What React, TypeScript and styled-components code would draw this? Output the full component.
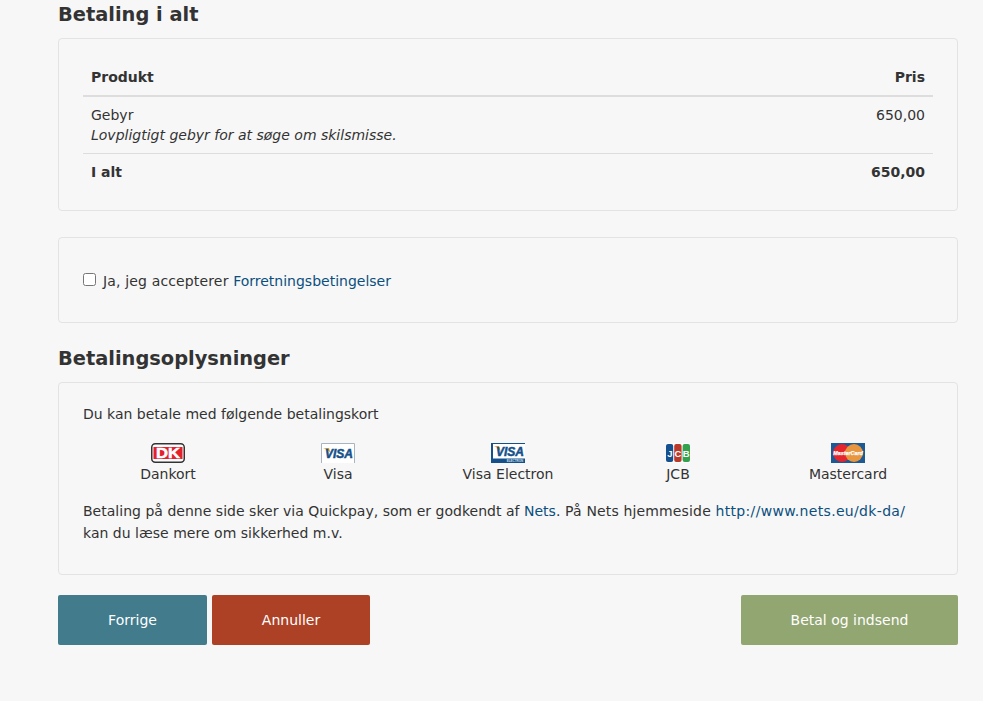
import styled, { createGlobalStyle } from "styled-components";

const GlobalStyle = createGlobalStyle`
  html, body {
    margin: 0;
    padding: 0;
    background: #f7f7f7;
    color: #333;
    font-family: "DejaVu Sans", Verdana, sans-serif;
    font-size: 14px;
    line-height: 20px;
  }
`;

const Page = styled.div`
  width: 900px;
  height: 701px;
  margin-left: 58px;
  overflow: hidden;
`;
const Heading = styled.h2<{ $mt: number }>`
  margin: ${(props) => props.$mt}px 0 0;
  font-size: 19.4px;
  line-height: 28px;
  font-weight: 700;
  color: #333;
`;
const Panel = styled.section<{ $height: number; $mt: number; $pt: number }>`
  box-sizing: border-box;
  height: ${(props) => props.$height}px;
  margin-top: ${(props) => props.$mt}px;
  padding: ${(props) => props.$pt}px 24px 0;
  border: 1px solid #e3e3e3;
  border-radius: 4px;
`;
const TotalTable = styled.table`
  width: 100%;
  border-collapse: collapse;
  th, td {
    padding: 8px;
    text-align: left;
    vertical-align: top;
  }
  th:last-child, td:last-child {
    text-align: right;
  }
  thead th {
    border-bottom: 2px solid #ddd;
  }
  tfoot td {
    border-top: 1px solid #ddd;
    font-weight: 700;
  }
`;
const Note = styled.em`
  display: block;
`;
const TermsRow = styled.label`
  display: flex;
  align-items: flex-start;
`;
const CheckBox = styled.input`
  width: 13px;
  height: 13px;
  margin: 2px 7px 0 0;
`;
const Tracked = styled.span`
  letter-spacing: 0.15px;
`;
const Link = styled.a`
  color: #0b4f7d;
  text-decoration: none;
  letter-spacing: 0;
`;
const UrlLink = styled(Link)`
  letter-spacing: 0.33px;
`;
const Intro = styled.p`
  margin: 0;
`;
const Paragraph = styled.p`
  margin: 0;
  line-height: 22px;
  letter-spacing: 0.02px;
`;
const CardList = styled.div`
  display: grid;
  grid-template-columns: repeat(5, 1fr);
  margin: 19px 0 16px;
  text-align: center;
`;
const Card = styled.div`
  display: flex;
  flex-direction: column;
  align-items: center;
`;
const CardLogo = styled.svg`
  display: block;
  width: 34px;
  height: 20px;
  margin-bottom: 1px;
`;
const LogoText = styled.text`
  font-family: "Liberation Sans", Arial, sans-serif;
  font-weight: 700;
`;
const Actions = styled.div`
  display: flex;
  gap: 5px;
  margin-top: 20px;
`;
const Button = styled.button<{ $color: string; $width: number }>`
  width: ${(props) => props.$width}px;
  height: 50px;
  padding: 0;
  border: 0;
  border-radius: 2px;
  background: ${(props) => props.$color};
  color: #fff;
  font-family: inherit;
  font-size: 14px;
`;
const Spacer = styled.div`
  flex: 1;
`;

function DankortLogo() {
  return (
    <CardLogo viewBox="0 0 34 20">
      <rect x="0.75" y="0.75" width="32.5" height="18.5" rx="3.5" fill="#fff" stroke="#333" strokeWidth="1.5" />
      <rect x="2.5" y="4" width="29" height="12" fill="#e3202b" />
      <LogoText x="17" y="15" textAnchor="middle" fontSize="14" textLength="24" lengthAdjust="spacingAndGlyphs" fill="#fff" stroke="#fff" strokeWidth="0.5">
        DK
      </LogoText>
    </CardLogo>
  );
}

function VisaLogo() {
  return (
    <CardLogo viewBox="0 0 34 20">
      <rect width="34" height="20" fill="#fff" />
      <path d="M0.5 20V0.5H33.5V20" fill="none" stroke="#a9b4c0" />
      <path d="M2 5H8L10 11C8.5 8 6 6 2 5Z" fill="#e8a33c" />
      <LogoText x="18" y="15" textAnchor="middle" fontSize="12" fontStyle="italic" fill="#15508a" stroke="#15508a" strokeWidth="0.5">
        VISA
      </LogoText>
    </CardLogo>
  );
}

function VisaElectronLogo() {
  return (
    <CardLogo viewBox="0 0 34 20">
      <rect width="34" height="20" fill="#15508a" />
      <rect x="2" y="1" width="32" height="14.5" fill="#fff" />
      <path d="M3 3H8L10 9C8.5 6 6 4 3 3Z" fill="#e8a33c" />
      <LogoText x="19" y="12.8" textAnchor="middle" fontSize="12" fontStyle="italic" fill="#15508a" stroke="#15508a" strokeWidth="0.5">
        VISA
      </LogoText>
      <LogoText x="24" y="19.2" textAnchor="middle" fontSize="3" fill="#cfe0ee">
        ELECTRON
      </LogoText>
    </CardLogo>
  );
}

function JcbLogo() {
  return (
    <CardLogo viewBox="0 0 34 20">
      <rect x="5" y="0" width="24" height="20" fill="#fff" />
      <rect x="5" y="1" width="7.2" height="18" rx="2" fill="#15508f" />
      <rect x="13.2" y="1" width="7.4" height="18" rx="2" fill="#b93a2b" />
      <rect x="21.6" y="1" width="7.4" height="18" rx="2" fill="#34a14f" />
      <LogoText x="8.8" y="14" textAnchor="middle" fontSize="9.5" fill="#fff">J</LogoText>
      <LogoText x="17" y="14" textAnchor="middle" fontSize="9.5" fill="#fff">C</LogoText>
      <LogoText x="25.3" y="14" textAnchor="middle" fontSize="9.5" fill="#fff">B</LogoText>
    </CardLogo>
  );
}

function MastercardLogo() {
  return (
    <CardLogo viewBox="0 0 34 20">
      <rect width="34" height="20" fill="#1c5a96" />
      <circle cx="11" cy="10" r="9" fill="#e5262c" />
      <circle cx="23" cy="10" r="9" fill="#e8973f" />
      <LogoText x="17" y="12" textAnchor="middle" fontSize="5.4" fontStyle="italic" fill="#fff" stroke="#fff" strokeWidth="0.25">
        MasterCard
      </LogoText>
    </CardLogo>
  );
}

const cards = [
  { name: "Dankort", logo: <DankortLogo /> },
  { name: "Visa", logo: <VisaLogo /> },
  { name: "Visa Electron", logo: <VisaElectronLogo /> },
  { name: "JCB", logo: <JcbLogo /> },
  { name: "Mastercard", logo: <MastercardLogo /> },
];

function App() {
  return (
    <Page>
      <GlobalStyle />
      <Heading $mt={1}>Betaling i alt</Heading>
      <Panel $height={173} $mt={9} $pt={20}>
        <TotalTable>
          <thead>
            <tr>
              <th>Produkt</th>
              <th>Pris</th>
            </tr>
          </thead>
          <tbody>
            <tr>
              <td>
                Gebyr
                <Note>Lovpligtigt gebyr for at søge om skilsmisse.</Note>
              </td>
              <td>650,00</td>
            </tr>
          </tbody>
          <tfoot>
            <tr>
              <td>I alt</td>
              <td>650,00</td>
            </tr>
          </tfoot>
        </TotalTable>
      </Panel>
      <Panel $height={86} $mt={26} $pt={33}>
        <TermsRow>
          <CheckBox type="checkbox" />
          <Tracked>
            Ja, jeg accepterer <Link href="#">Forretningsbetingelser</Link>
          </Tracked>
        </TermsRow>
      </Panel>
      <Heading $mt={22}>Betalingsoplysninger</Heading>
      <Panel $height={193} $mt={9} $pt={21}>
        <Intro>Du kan betale med følgende betalingskort</Intro>
        <CardList>
          {cards.map((card) => (
            <Card key={card.name}>
              {card.logo}
              {card.name}
            </Card>
          ))}
        </CardList>
        <Paragraph>
          Betaling på denne side sker via Quickpay, som er godkendt af <Link href="#">Nets</Link>
          <Tracked>. På Nets hjemmeside </Tracked>
          <UrlLink href="#">http://www.nets.eu/dk-da/</UrlLink> kan du læse mere om sikkerhed m.v.
        </Paragraph>
      </Panel>
      <Actions>
        <Button $color="#417b8c" $width={149}>Forrige</Button>
        <Button $color="#ad4126" $width={158}>Annuller</Button>
        <Spacer />
        <Button $color="#92a672" $width={217}>Betal og indsend</Button>
      </Actions>
    </Page>
  );
}

export default App;
